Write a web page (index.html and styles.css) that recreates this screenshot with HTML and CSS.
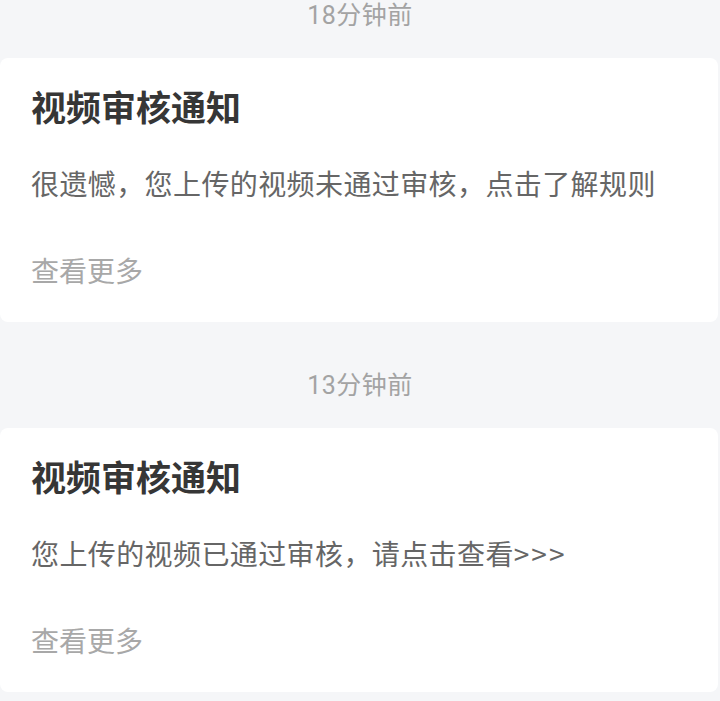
FILE: index.html
```html
<!DOCTYPE html>
<html lang="zh-CN">
<head>
<meta charset="utf-8">
<title>消息通知</title>
<link rel="stylesheet" href="styles.css">
</head>
<body>
<main class="list">
  <section class="item">
    <div class="time">18分钟前</div>
    <article class="card">
      <h2 class="title">视频审核通知</h2>
      <p class="desc">很遗憾，您上传的视频未通过审核，点击了解规则</p>
      <a class="more">查看更多</a>
    </article>
  </section>
  <section class="item">
    <div class="time">13分钟前</div>
    <article class="card">
      <h2 class="title">视频审核通知</h2>
      <p class="desc">您上传的视频已通过审核，请点击查看<span class="arrows">&gt;&gt;&gt;</span></p>
      <a class="more">查看更多</a>
    </article>
  </section>
</main>
</body>
</html>
```

FILE: styles.css
```css
html, body {
  margin: 0;
  padding: 0;
  background: #f5f6f8;
  font-family: "Noto Sans CJK SC", "Noto Sans", sans-serif;
}

.list {
  display: flex;
  flex-direction: column;
  gap: 48px;
}

.item {
  display: flex;
  flex-direction: column;
}

.time {
  height: 30px;
  line-height: 30px;
  padding-top: 1px;
  font-family: Roboto, "Noto Sans CJK SC", sans-serif;
  font-size: 25px;
  letter-spacing: 0.5px;
  color: #a3a3a3;
  text-align: center;
  margin-bottom: 27px;
}

.card {
  background: #ffffff;
  border-radius: 8px;
  margin-right: 2px;
  height: 264px;
  box-sizing: border-box;
  padding: 26px 31px 0 31px;
  display: flex;
  flex-direction: column;
}

.title {
  margin: 0;
  font-size: 35px;
  line-height: 44px;
  font-weight: 700;
  color: #363636;
}

.desc {
  margin: 35px 0 0 0;
  font-size: 28px;
  line-height: 40px;
  letter-spacing: 0.4px;
  color: #666666;
}

.arrows {
  letter-spacing: 2px;
}

.more {
  margin-top: 47px;
  font-size: 28px;
  line-height: 40px;
  color: #a8a8a8;
}
```
